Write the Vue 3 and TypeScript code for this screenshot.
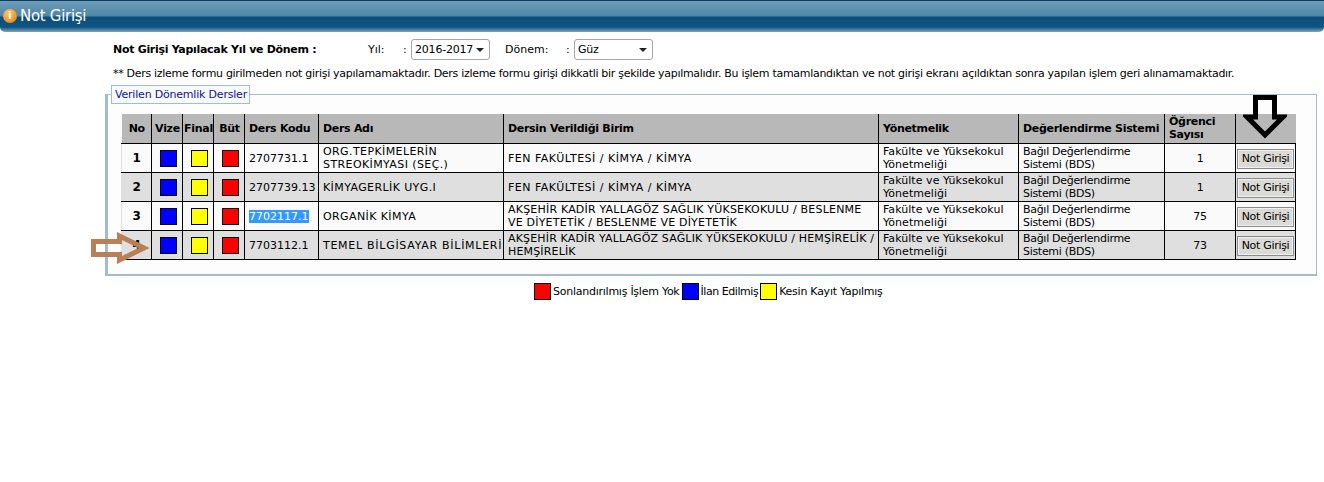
<script setup lang="ts">
interface Row { no: number; code: string; name: string; nameFit?: string; unit: string; fit: string; count: number; selected?: boolean }
const rows: Row[] = [
  { no: 1, code: '2707731.1', name: 'ORG.TEPKİMELERİN STREOKİMYASI (SEÇ.)', unit: 'FEN FAKÜLTESİ / KİMYA / KİMYA', fit: 'u-wide', count: 1 },
  { no: 2, code: '2707739.13', name: 'KİMYAGERLİK UYG.I', nameFit: 'n-one', unit: 'FEN FAKÜLTESİ / KİMYA / KİMYA', fit: 'u-wide', count: 1 },
  { no: 3, code: '7702117.1', name: 'ORGANİK KİMYA', nameFit: 'n-one', unit: 'AKŞEHİR KADİR YALLAGÖZ SAĞLIK YÜKSEKOKULU / BESLENME VE DİYETETİK / BESLENME VE DİYETETİK', fit: 'u-mid', count: 75, selected: true },
  { no: 4, code: '7703112.1', name: 'TEMEL BİLGİSAYAR BİLİMLERİ', nameFit: 'n-wide', unit: 'AKŞEHİR KADİR YALLAGÖZ SAĞLIK YÜKSEKOKULU / HEMŞİRELİK / HEMŞİRELİK', fit: 'u-fit', count: 73 }
]
const widths = [30, 31, 31, 31, 74, 185, 375, 140, 146, 71, 60]
</script>

<template>
  <div class="page">
    <header class="bar">
      <span class="info">i</span>
      <h1>Not Girişi</h1>
    </header>

    <div class="filters">
      <strong class="filter-title">Not Girişi Yapılacak Yıl ve Dönem :</strong>
      <span class="lbl-year">Yıl:</span>
      <span class="colon">:</span>
      <span class="select"><span>2016-2017</span><i></i></span>
      <span class="lbl-term">Dönem:</span>
      <span class="colon">:</span>
      <span class="select"><span>Güz</span><i></i></span>
    </div>

    <p class="note">** Ders izleme formu girilmeden not girişi yapılamamaktadır. Ders izleme formu girişi dikkatli bir şekilde yapılmalıdır. Bu işlem tamamlandıktan ve not girişi ekranı açıldıktan sonra yapılan işlem geri alınamamaktadır.</p>

    <section class="box">
      <div class="legend">Verilen Dönemlik Dersler</div>
      <table>
        <colgroup>
          <col v-for="(w, i) in widths" :key="i" :style="{ width: w + 'px' }" />
        </colgroup>
        <thead>
          <tr>
            <th class="c">No</th><th class="c">Vize</th><th class="c">Final</th><th class="c">Büt</th>
            <th>Ders Kodu</th><th>Ders Adı</th><th>Dersin Verildiği Birim</th><th>Yönetmelik</th>
            <th>Değerlendirme Sistemi</th><th class="tight">Öğrenci Sayısı</th><th></th>
          </tr>
        </thead>
        <tbody>
          <tr v-for="r in rows" :key="r.no">
            <td class="c no">{{ r.no }}</td>
            <td class="c mark"><span class="sw blue"></span></td>
            <td class="c mark"><span class="sw yellow"></span></td>
            <td class="c mark"><span class="sw red"></span></td>
            <td class="txt"><span :class="{ sel: r.selected }">{{ r.code }}</span></td>
            <td class="name" :class="r.nameFit">{{ r.name }}</td>
            <td :class="r.fit">{{ r.unit }}</td>
            <td class="plain">Fakülte ve Yüksekokul Yönetmeliği</td>
            <td>Bağıl Değerlendirme Sistemi (BDS)</td>
            <td class="c count">{{ r.count }}</td>
            <td class="c action"><button type="button">Not Girişi</button></td>
          </tr>
        </tbody>
      </table>

      <svg class="arrow-down" width="44" height="46" viewBox="0 0 44 46">
        <path d="M12.5 3.5H31.5V23H40L22 41L4 23H12.5Z" fill="none" stroke="#000" stroke-width="5" />
      </svg>
      <svg class="arrow-right" width="62" height="36" viewBox="0 0 62 36">
        <path d="M3.5 11.5H29.5V6L54 18L29.5 30V24.5H3.5Z" fill="none" stroke="#b98058" stroke-width="5" />
      </svg>
    </section>

    <div class="key">
      <span class="sw red"></span><span>Sonlandırılmış İşlem Yok</span>
      <span class="sw blue"></span><span class="key-short">İlan Edilmiş</span>
      <span class="sw yellow"></span><span>Kesin Kayıt Yapılmış</span>
    </div>
  </div>
</template>

<style scoped>
.page {
  width: 1324px;
  height: 482px;
  overflow: hidden;
  background: #fff;
  color: #000;
  font-family: "DejaVu Sans", sans-serif;
  font-size: 11px;
}
.bar {
  height: 32px;
  display: flex;
  align-items: center;
  gap: 3px;
  padding: 0 0 2px 3px;
  box-sizing: border-box;
  border-radius: 0 0 5px 5px;
  border-top: 1px solid #0b3f63;
  background: linear-gradient(#6f9cb8 0, #4f86a8 15px, #0c4f7c 16px, #0f5480 26px, #7fa6bc 31px);
}
.info {
  width: 14px;
  height: 14px;
  border-radius: 50%;
  background: radial-gradient(circle at 40% 30%, #ffc860, #e07a10);
  color: #fff;
  font: bold 10px/14px "DejaVu Sans", sans-serif;
  text-align: center;
}
h1 {
  margin: 0;
  font-size: 15px;
  font-weight: 400;
  letter-spacing: -0.3px;
  color: #fff;
}
.filters {
  display: flex;
  align-items: center;
  height: 23px;
  margin-top: 6px;
  padding-left: 113px;
}
.filter-title { width: 255px; letter-spacing: -0.3px; white-space: nowrap; }
.lbl-year { width: 35px; }
.lbl-term { width: 61px; margin-left: 15px; }
.colon { width: 8px; }
.select {
  width: 79px;
  height: 21px;
  box-sizing: border-box;
  display: flex;
  align-items: center;
  justify-content: space-between;
  padding: 0 5px 0 3px;
  border: 1px solid #a6a6a6;
  border-radius: 3px;
  letter-spacing: -0.2px;
}
.select i {
  width: 0;
  height: 0;
  border: 4px solid transparent;
  border-top: 4px solid #222;
  border-bottom: 0;
}
.note { margin: 5px 0 0 113px; line-height: 16px; white-space: nowrap; letter-spacing: -0.3px; }
.box {
  position: relative;
  box-sizing: border-box;
  width: 1212px;
  height: 182px;
  margin: 12px 0 0 105px;
  padding: 19px 0 0 13px;
  border: 1px solid #a3bccc;
  border-left-width: 3px;
  border-bottom-width: 2px;
  background: #fdfdfd;
}
.legend {
  position: absolute;
  left: 3px;
  top: -10px;
  width: 139px;
  padding: 0 3px;
  height: 19px;
  line-height: 18px;
  box-sizing: border-box;
  border: 1px solid #a3bccc;
  background: #f8fbfd;
  color: #11119a;
  letter-spacing: -0.2px;
  white-space: nowrap;
}
table {
  width: 1174px;
  table-layout: fixed;
  border-collapse: collapse;
}
th {
  height: 29px;
  box-sizing: border-box;
  padding: 0 3px 0 4px;
  background: #b8b8b8;
  border-left: 1px solid #000;
  border-bottom: 1px solid #000;
  text-align: left;
  font-weight: 700;
  line-height: 13px;
  letter-spacing: -0.3px;
}
th:first-child { border-left: 0; }
td {
  height: 29px;
  box-sizing: border-box;
  padding: 1px 3px 0 4px;
  border: 1px solid #000;
  line-height: 13.5px;
  overflow: hidden;
  letter-spacing: -0.3px;
}
td:first-child { border-left: 1px solid #dedede; }
tbody tr:nth-child(odd) td { background: #fafafa; }
tbody tr:nth-child(even) td { background: #dfdfdf; }
th.c { text-align: center; padding: 0 0 0 1px; }
td.c { text-align: center; padding: 0; }
td.mark { padding: 2px 0 0 2px; }
td.action { padding-top: 2px; }
td.no { font-weight: 700; font-size: 12px; padding-top: 2px; }
td.count { padding-top: 2px; }
td.txt { letter-spacing: 0; padding-top: 2px; }
td.name { letter-spacing: 0.4px; }
td.n-one { padding-top: 2px; }
td.n-wide { letter-spacing: 0.72px; padding: 2px 0 0 4px; white-space: nowrap; }
td.plain { letter-spacing: 0.05px; }
td.u-wide { letter-spacing: 0.5px; padding-top: 2px; }
td.u-mid { letter-spacing: 0.2px; }
td.u-fit { letter-spacing: 0.16px; padding-right: 0; }
th.tight { padding-right: 20px; }
.sel { background: #3399ff; color: #fff; }
.sw {
  display: inline-block;
  width: 17px;
  height: 17px;
  box-sizing: border-box;
  border: 1px solid #000;
  vertical-align: middle;
}
.blue { background: #0000ff; }
.yellow { background: #ffff00; }
.red { background: #ff0000; }
button {
  width: 57px;
  height: 20px;
  padding: 0;
  background: #dcdad6;
  border: 1px solid #8a8a8a;
  box-shadow: inset 0 0 0 1px #f0f0f0;
  font: 11px "DejaVu Sans", sans-serif;
  letter-spacing: -0.3px;
  color: #000;
  vertical-align: middle;
}
.arrow-down { position: absolute; left: 1135px; top: -1px; }
.arrow-right { position: absolute; left: -18px; top: 135px; }
.key {
  display: flex;
  align-items: center;
  gap: 2px;
  margin: 6px 0 0 534px;
  height: 18px;
  letter-spacing: -0.25px;
}
.key-short { letter-spacing: -0.45px; }
</style>
